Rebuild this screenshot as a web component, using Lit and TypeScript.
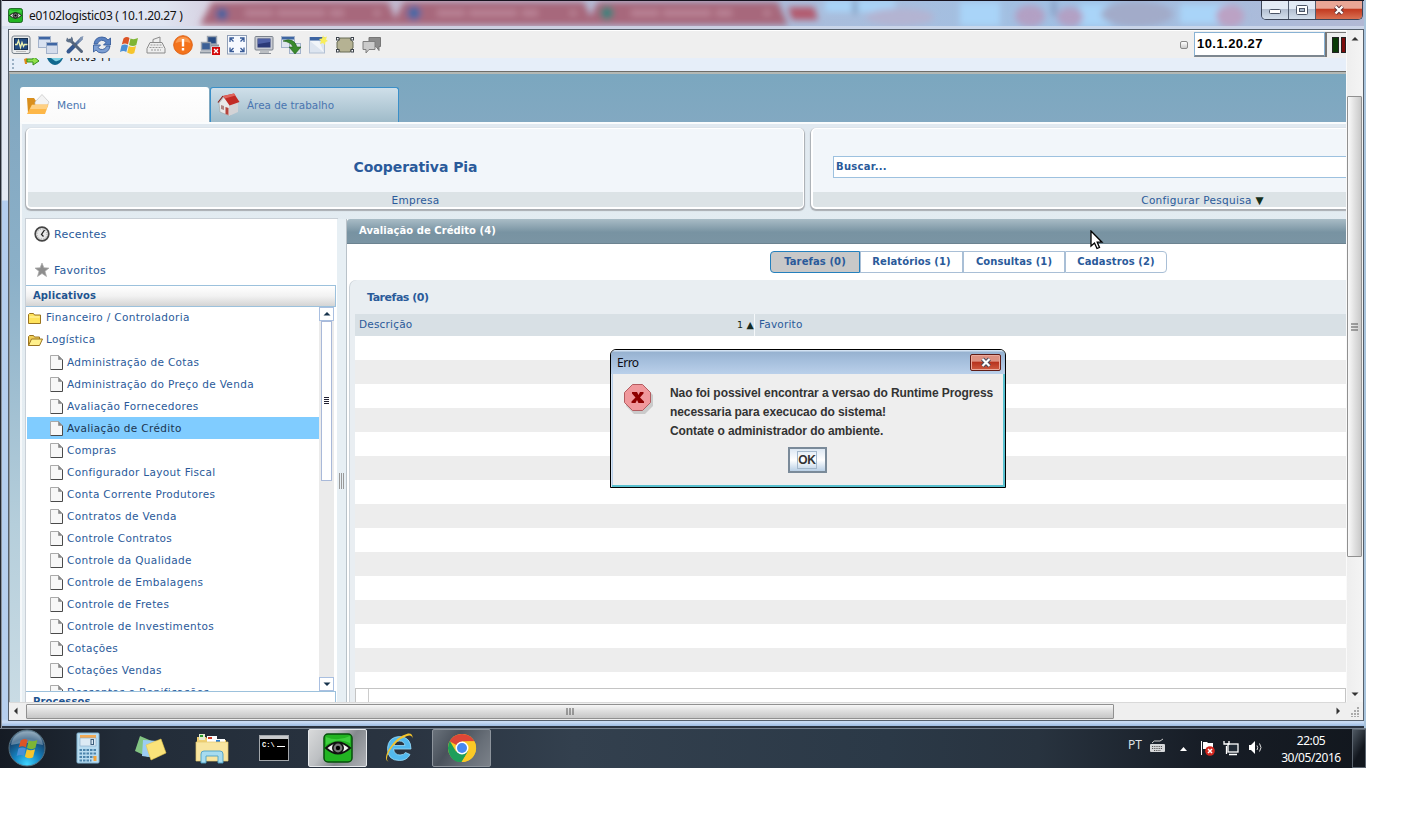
import { LitElement, html, svg, css } from "lit";
import { customElement } from "lit/decorators.js";
import { classMap } from "lit/directives/class-map.js";

const ico = (w: number, h: number, body: unknown) =>
  html`<svg width=${w} height=${h} viewBox="0 0 ${w} ${h}" aria-hidden="true">${body}</svg>`;

const TREE = [
  "Administração de Cotas", "Administração do Preço de Venda", "Avaliação Fornecedores",
  "Avaliação de Crédito", "Compras", "Configurador Layout Fiscal", "Conta Corrente Produtores",
  "Contratos de Venda", "Controle Contratos", "Controle da Qualidade", "Controle de Embalagens",
  "Controle de Fretes", "Controle de Investimentos", "Cotações", "Cotações Vendas",
  "Descontos e Bonificações",
];

const eye = (s: number) => html`<svg width=${s} height=${s} viewBox="0 0 30 30">
  <rect x="1" y="1" width="28" height="28" rx="4" fill="#22b422" stroke="#064d0c" stroke-width="1.5"/>
  <path d="M3 4Q15 9 27 3V10Q15 4 3 12Z" fill="#4cd84c" opacity=".7"/>
  <path d="M3 15Q15 4 27 15Q15 26 3 15Z" fill="#f4f4f4" stroke="#111" stroke-width="1.8"/>
  <circle cx="15" cy="15" r="5.2" fill="#777" stroke="#111" stroke-width="1.6"/>
  <circle cx="15" cy="15" r="2.2" fill="#000"/></svg>`;

const winFlag = svg`<g><path d="M4.500 3.500Q7.500 1 10.500 3L9 9.500Q6 7.500 2.800 9.500Z" fill="#dc5426"/><path d="M11.500 3.500Q15 5 19 3L17.300 10Q14 12 10 10Z" fill="#7fb534"/><path d="M2.500 10.500Q6 8.500 9 10.500L7.300 17Q4.500 15 1 17Z" fill="#4a8fd6"/><path d="M9.800 11Q13 13 17 11L15.300 18Q12 20 8.200 17.500Z" fill="#f6c52d"/></g>`;

const TOOLS = [
  svg`<rect x="1" y="1" width="18" height="17.500" rx="2" fill="#e9ebec" stroke="#7a838c"/><rect x="3.500" y="3.500" width="13" height="11" fill="#234c80" stroke="#16304f"/><path d="M4 9.500h2l1.500-4 2 7 1.500-5 1.500 4 1-2h3" fill="none" stroke="#eef2b0" stroke-width="1.300"/><path d="M5 16.500h10" stroke="#bbb"/>`,
  svg`<rect x=".5" y="1.500" width="12" height="11" fill="#d9e2f1" stroke="#a3b2ca"/><rect x="1" y="2" width="11" height="2.500" fill="#3f66a3"/><rect x="8.500" y="7.500" width="11" height="11" fill="#d4dceb" stroke="#a3b2ca"/><rect x="9" y="8" width="10" height="2.500" fill="#3f66a3"/>`,
  svg`<path d="M17 3L10 10" stroke="#5d78a3" stroke-width="3"/><path d="M10 10L3.500 16.500" stroke="#35588f" stroke-width="4" stroke-linecap="round"/><path d="M5 5l11.500 11.500" stroke="#53647b" stroke-width="3" stroke-linecap="round"/><path d="M2 2.500l3 3 1.500-4Q9 4 7.500 7 4 8.500 1 6Z" fill="#5f7189"/><path d="M14 6l1.500-4 3-1-1 3-2.500 3Z" fill="#8296b4"/>`,
  svg`<path d="M2 9Q3 2 10 2q4 0 6 3l2.500-2v7h-7l2.500-2.500Q12 5 9.500 5.300 6 6 5.500 9Z" fill="#5c83c1" stroke="#2c5394" stroke-width=".8"/><path d="M18 11q-1 7-8 7-4 0-6-3l-2.500 2v-7h7L6 12.500q2 2.500 4.500 2Q14 14 14.500 11Z" fill="#7d9fd3" stroke="#2c5394" stroke-width=".8"/>`,
  winFlag,
  svg`<path d="M4 7.500h12l3 6v4.500H1v-4.500Z" fill="#eee" stroke="#8b8b8b"/><path d="M7 7V4.500L14 2v5" fill="none" stroke="#8b8b8b"/><path d="M4.500 10h11M3.500 12.500h13M5 15h10" stroke="#999" stroke-dasharray="2 1"/>`,
  svg`<circle cx="10" cy="10" r="9.300" fill="#f4731c" stroke="#de6418"/><path d="M2.500 8Q4 2 10 2t7.500 6Q10 5 2.500 8" fill="#fba45f" opacity=".8"/><rect x="8.800" y="4" width="2.400" height="7.500" fill="#fff"/><rect x="8.800" y="13" width="2.400" height="2.500" fill="#fff"/>`,
  svg`<rect x="7.500" y="1.500" width="9" height="7.500" fill="#274a82" stroke="#9aa3b0" stroke-width="1.400"/><rect x="1.500" y="7.500" width="9" height="7.500" fill="#3b5f96" stroke="#9aa3b0" stroke-width="1.400"/><path d="M0 17.500h11M11 10.500h8" stroke="#8b949f" stroke-width="2"/><rect x="12" y="12" width="8" height="8" fill="#d40b0b"/><path d="M14 14l4 4m0-4l-4 4" stroke="#fff" stroke-width="1.300"/>`,
  svg`<rect x=".5" y=".5" width="19" height="18.500" fill="#f6f9ff" stroke="#8f9eb6"/><path d="M3 7V3h4M3.500 3.500l3 3M17 7V3h-4M16.500 3.500l-3 3M3 12.500v4h4M3.500 16l3-3M17 12.500v4h-4M16.500 16l-3-3" fill="none" stroke="#3a5c98" stroke-width="1.300"/>`,
  svg`<rect x="1" y="1.500" width="18" height="13.500" rx="1" fill="#c9ccd3" stroke="#7c838d"/><rect x="3.500" y="3.500" width="13" height="9" fill="#2b3978"/><path d="M4 4h12v3L4 9Z" fill="#4f60a6"/><path d="M6 17h9M5 18.500h12" stroke="#8a8f98" stroke-width="1.200"/>`,
  svg`<rect x=".5" y="1.500" width="13" height="11" fill="#dfe5ef" stroke="#a3b2ca"/><rect x="1" y="2" width="12" height="2.500" fill="#3f66a3"/><rect x="8.500" y="8.500" width="11" height="10" fill="#dfe5ef" stroke="#a3b2ca"/><path d="M2 6Q13 2 16 12h4l-6 7-6-7h4Q10 7 2 6Z" fill="#3a8a2c" stroke="#22601a" stroke-width=".6"/>`,
  svg`<rect x="1.500" y="2.500" width="15" height="15.500" fill="#dde5f0" stroke="#b3c0d3"/><path d="M2 2h13v3.500H2Z" fill="#3d64a1"/><path d="M2 6h9l5 11.500" fill="#fff" opacity=".6"/><path d="M15 0l1 2.500 3-1-1 3 2 1.500-2.500 1-.5 3-2-2-3 1 1-3-2-2 3-.500Z" fill="#f8ee5c"/>`,
  svg`<path d="M5 3h10q1 3 3 4v6q-2 1-3 4H5q-1-3-3-4V7q2-1 3-4Z" fill="#b5b293" stroke="#666a55"/><g fill="#fff" stroke="#3d434b"><rect x="1.500" y="2.500" width="2.500" height="2.500"/><rect x="16" y="2.500" width="2.500" height="2.500"/><rect x="1.500" y="14.500" width="2.500" height="2.500"/><rect x="16" y="14.500" width="2.500" height="2.500"/></g>`,
  svg`<path d="M7 2.500h11.500v9h-1.500v4l-3-4H7Z" fill="#8b8b8b" stroke="#777"/><path d="M1 6.500h12v8H7l-3 3.500v-3.500H1Z" fill="#cbcbcb" stroke="#7f7f7f"/>`,
];

@customElement("app-root")
export class AppRoot extends LitElement {
  static styles = css`
    :host { display: block; width: 1426px; height: 820px; overflow: hidden; background: #fff;
      font-family: "DejaVu Sans", Verdana, sans-serif; font-size: 10px; color: #2a5a9a; }
    * { box-sizing: border-box; }
    svg { display: block; flex: none; }
    .desktop { position: relative; width: 1366px; height: 768px; display: flex; flex-direction: column; background: #1b2230; }
    .win { height: 728px; display: flex; flex-direction: column; padding: 0 2px 8px 8px;
      background: linear-gradient(90deg, #23272f 0 1px, #8d949e 1px 2px, transparent 2px 1364px, #a9c4dc 1364px),
        linear-gradient(180deg, #dfe6f2 0, #e4eaf4 200px, #b4cdee 201px, #b6cfee 719px, #cadcf4 722px, #9dbce2 726px, #2a3340 726px); }
    .title { height: 29px; margin-left: -6px; position: relative; display: flex; align-items: flex-start; border-top: 1px solid #17131f; background: #d6dbec; overflow: hidden; flex: none; }
    .backdrop { position: absolute; inset: 0; }
    .title .cap { position: relative; display: flex; align-items: center; gap: 6px; padding: 5px 0 0 6px; height: 23px; font: 12px "Noto Sans", "Open Sans", sans-serif; letter-spacing: -0.28px; color: #111; white-space: nowrap; }
    .wbtns { position: relative; margin-left: auto; margin-right: 1px; display: flex; height: 19px; border: 1px solid #3c4658; border-top: 0; border-radius: 0 0 5px 5px; overflow: hidden; }
    .wbtns div { display: flex; align-items: center; justify-content: center; width: 27px; background: linear-gradient(#e3ebf5 0 45%, #b3bfd1 46%, #d4dfec); border-right: 1px solid #515c6e; }
    .wbtns .x { width: 46px; border: 0; background: linear-gradient(#e9a696 0 40%, #c23a20 46%, #d97052); }
    .client { height: 692px; flex: none; width: 1356px; border: 1px solid #56606c; display: grid; grid-template: 672px 17px / 1337px 17px; background: #efefef; overflow: hidden; }
    .view { display: flex; flex-direction: column; overflow: hidden; margin-left: -1px; }
    .tools { height: 28px; flex: none; display: flex; align-items: center; background: #efefef; border-top: 1px solid #fff; padding-left: 3px; }
    .tools .ic { width: 27px; display: flex; }
    .conn { margin-left: auto; display: flex; align-items: center; gap: 6px; height: 27px; }
    .led { width: 8px; height: 8px; border: 1px solid #888; border-radius: 2px; background: linear-gradient(#fff, #ccc); }
    .ip { width: 131px; height: 25px; background: #fff; border: 1px solid #88b2d4; border-bottom: 2px solid #7d8790; padding: 3px 2px; font: bold 13px/15px "Liberation Sans", Arial, sans-serif; letter-spacing: .45px; color: #000; }
    .meter { height: 25px; width: 21px; margin-left: -6px; border-left: 2px solid #777; border-top: 1px solid #777; padding: 4px 0 0 5px; display: flex; gap: 2px; }
    .meter i { width: 8px; height: 16px; background: #0b3a07; border: 1px solid #222; } .meter i + i { background: #7c0d0d; width: 6px; }
    .crumb { height: 14px; flex: none; overflow: hidden; background: #e6eef9; display: flex; border-bottom: 1px solid #6e6e6a; padding-left: 3px; gap: 8px; }
    .crumb span { font: 11.500px/12px "Noto Sans", sans-serif; color: #111; margin-top: -7px; margin-left: -3px; }
    .page { flex: 1; min-height: 0; display: flex; flex-direction: column; padding: 13px 0 0 10px; border-top: 2px solid #b4b8b4; border-left: 2px solid #969da0;
      background: linear-gradient(#7ba7bf, #84a9c2 60px, #8bb0c8 200px, #b5cedb 450px, #c9dbe4); }
    .tabs { height: 35px; flex: none; display: flex; gap: 1px; font-size: 10.600px; color: #4a75b0; }
    .tab { width: 189px; display: flex; align-items: center; gap: 7px; padding-left: 6px; border-radius: 3px 3px 0 0; background: linear-gradient(#fff, #fafafa); }
    .tab.b { border: 1px solid #3a8fc8; border-bottom: 0; background: linear-gradient(#cfdfe9, #9fbbc9); gap: 6px; }
    .tab.b span { font-size: 10.400px }
    .body { flex: 1; min-height: 0; display: flex; flex-direction: column; gap: 10px; background: linear-gradient(#e1e9f0, #e2ebf1 60px, #e8eff3); border-top: 2px solid #fafcfd; border-left: 2px solid #f5f8fa; padding: 4px 0 0 4px; }
    .cards { display: flex; height: 81px; gap: 7px; flex: none; font-size: 10.500px; letter-spacing: .3px; }
    .card { flex: none; border: 2px solid #fff; border-top-width: 1px; border-right-width: 1px; border-radius: 5px; box-shadow: 0 1px 1px 1px #a9adb2; background: #f2f6fa; display: flex; flex-direction: column; overflow: hidden; }
    .card .main { flex: 1; display: flex; align-items: center; justify-content: center; padding-top: 13px; }
    .card .foot { height: 15px; background: #dce3e6; text-align: center; line-height: 17px; }
    .c1 { width: 778px; } .c2 { width: 600px; }
    .c1 .main { font: bold 14px "DejaVu Sans"; letter-spacing: -.06px; }
    .search { flex: 1; margin-left: 20px; margin-right: -4px; height: 22px; border: 1px solid #9dc1df; background: #fff; line-height: 19px; padding-left: 2px; font-weight: bold; font-size: 10px; letter-spacing: .3px }
    .c2 .foot { padding-left: 182px; }
    .c2 .foot .dn { color: #16301c; }
    .cols { flex: 1; min-height: 0; display: flex; }
    .side { width: 311px; flex: none; display: flex; flex-direction: column; background: #fff; box-shadow: 0 0 0 1px #c9d0d7; }
    .quick { height: 36px; flex: none; display: flex; align-items: center; gap: 4px; padding: 0 0 6px 8px; font-size: 11px; letter-spacing: .25px; }
    .q2 { height: 30px; padding-bottom: 0; }
    .sec { height: 22px; flex: none; font-weight: bold; line-height: 20px; padding-left: 7px; border: 1px solid #9cc1dc; border-left: 0; margin-right: 1px; background: linear-gradient(#fff, #f2f2f2 50%, #d4d4d4); letter-spacing: .1px; color: #1f5490 }
    .sec.p { height: 13px; overflow: hidden; background: #fff; border-bottom: 0; }
    .treebox { height: 384px; display: flex; flex: none; }
    .tree { width: 293px; overflow: hidden; font-size: 10.500px; letter-spacing: .34px; }
    .row { height: 22px; display: flex; align-items: center; gap: 3px; padding-left: 2px; white-space: nowrap; }
    .row span { margin-top: -2px; } .leaf span { margin-top: -1px; }
    .leaf { padding-left: 24px; gap: 4px; } .leaf svg { margin-top: 1px; }
    .sel { background: #80ccff; color: #1b3550; margin-left: 1px; padding-left: 23px; }
    .sb { width: 15px; background: #ebebeb; display: flex; flex-direction: column; }
    .sb .bt { height: 14px; border: 1px solid #a9bfe0; background: #fff; display: grid; place-items: center; }
    .sb .th { height: 160px; margin: 0 2px; border: 1px solid #a9b9d9; background: #fff; display: grid; place-items: center; }
    .sb .bt.d { margin-top: auto; }
    .split { width: 10px; flex: none; display: grid; place-items: center; padding-top: 40px; border-right: 1px solid #b9c2c9; background: #e7eff4; }
    .panel { flex: 1; min-width: 0; display: flex; flex-direction: column; background: #fff; }
    .ph { height: 25px; flex: none; background: linear-gradient(#a9bcc6, #7893a2 55%, #7a94a3); border-bottom: 1px solid #6c8390; color: #fff; font-weight: bold; line-height: 23px; padding-left: 12px; border-radius: 3px 0 0 0; letter-spacing: .05px; }
    .seg { display: flex; margin: 7px 0 7px 423px; height: 22px; flex: none; font-weight: bold; letter-spacing: .1px }
    .seg div { border: 1px solid #a9bfd6; text-align: center; line-height: 19px; background: #fff; white-space: nowrap; flex: none; }
    .seg .on { background: #c8c8c8; border-color: #2480bd; border-radius: 4px 0 0 4px; }
    .seg .last { border-radius: 0 4px 4px 0; }
    .grid { flex: 1; min-height: 0; margin-left: 3px; padding-left: 5px; background: #e9eef2; border-radius: 7px 0 0 0; display: flex; flex-direction: column; box-shadow: -1px 0 0 #ccd3d9; }
    .gt { height: 34px; flex: none; font: bold 11px/36px "DejaVu Sans"; letter-spacing: -.46px; padding-left: 12px; }
    .gh { height: 22px; flex: none; display: flex; background: #d8e0e5; line-height: 21px; font-size: 10.500px; letter-spacing: .2px; }
    .gh .d { width: 400px; display: flex; padding: 0 0 0 4px; border-right: 1px solid #f5f8fa; }
    .gh .d b { margin-left: auto; font-weight: normal; color: #152a22; font-size: 9.500px }
    .gh .f { padding-left: 4px; }
    .zebra { height: 352px; flex: none; background: repeating-linear-gradient(#fff 0 24px, #ededed 24px 48px); }
    .gf { height: 15px; flex: none; background: #fff; border: 1px solid #c4c4c4; } .gf i { display: block; width: 13px; height: 13px; border-right: 1px solid #ccc; }
    .vs { display: flex; flex-direction: column; align-items: center; justify-content: space-between; background: linear-gradient(90deg, #eee, #f4f4f4); padding: 5px 1px 4px 0; height: 672px; border-left: 1px solid #fafafa; }
    .vs .th { width: 15px; height: 461px; margin: 53px 0 auto; border: 1px solid #909090; border-radius: 1px; background: linear-gradient(90deg, #fafafa, #e3e3e3 45%, #c9c9c9); display: grid; place-items: center; }
    .hs { display: flex; align-items: center; justify-content: space-between; background: #efefef; border-top: 1px solid #d9d9d9; padding: 0 4px 0 3px; }
    .hs .th { width: 1088px; height: 15px; margin: 0 auto 0 6px; border: 1px solid #909090; border-radius: 1px; background: linear-gradient(#f7f7f7, #dedede 45%, #c6c6c6); display: grid; place-items: center; }
    .grip { display: grid; place-items: center; padding-top: 3px; }
    .task { height: 40px; display: flex; align-items: stretch; background: linear-gradient(#76818e 0 1px, transparent 1px), linear-gradient(90deg, #151b24, #222c38 9%, #2a3441 30%, #33404e 42%, #2b3947 65%, #28333f 76%, #171d26 88%, #12171e); }
    .ap { width: 62px; display: grid; place-items: center; }
    .ap.st { width: 57px; padding-right: 4px; }
    .ap.on { width: 59px; border: 1px solid #e6e9ec; border-radius: 2px; background: linear-gradient(125deg, #d9dadb 0, #bcbfc2 35%, #85898e 60%, #aeb1b6); margin: 1px 1px 1px 3px; height: 38px; }
    .ap.ch { margin-left: 2px; border-color: #8d949c; background: linear-gradient(125deg, #6a727b, #4a525c 35%, #686f78 70%, #7b8189); }
    .tray { margin-left: auto; display: flex; align-items: center; color: #fff; font: 12px "Noto Sans", "Open Sans", sans-serif; }
    .tray .pt { font-size: 12px; color: #dde1e6; margin-right: 7px; margin-top: -7px; }
    .tray .kb { margin-top: -5px; }
    .clock { text-align: center; line-height: 17px; width: 60px; letter-spacing: -.42px; font-size: 12px; margin: 1px 11px 0 17px; white-space: nowrap; }
    .show { width: 14px; height: 39px; border: 1px solid #5c656f; background: linear-gradient(120deg, #4e5862, #12171e 60%); align-self: flex-end; }
    .dlg { position: absolute; left: 610px; top: 349px; width: 396px; height: 139px; border: 1px solid #000; border-radius: 6px 6px 0 0; background: #eee; box-shadow: inset 1px 0 #d5e4f5, inset -2px -2px #58c0cf, inset 2px 0 #b9cfe8; display: flex; flex-direction: column; color: #222; overflow: hidden; }
    .dt { height: 24px; flex: none; display: flex; justify-content: space-between; padding: 4px 4px 0 6px; background: linear-gradient(#d3e2f2 0 1px, #97b2d0 2px, #a3bddb 40%, #bad0ea); font: 12px/18px "Noto Sans", sans-serif; letter-spacing: -.5px; color: #0c0c14; }
    .dx { width: 31px; height: 17px; border: 1px solid #5f1c16; border-radius: 2px; box-shadow: inset 0 0 0 1px #eba99b; background: linear-gradient(#dd9181 0 42%, #b6311c 46%, #cf5c42); display: grid; place-items: center; }
    .db { display: flex; gap: 16px; padding: 9px 0 0 12px; }
    .msg { font: bold 12px/19px "Liberation Sans", Arial, sans-serif; white-space: nowrap; color: #333; letter-spacing: -.078px; padding-top: 1px; }
    .ok { align-self: center; width: 39px; height: 26px; border: 2px solid #7a8a99; background: linear-gradient(#dde8f3, #fff 50%, #b8cfe5); margin-top: 6px; margin-left: -2px; display: grid; place-items: center; font: bold 12px/15px "Liberation Sans", Arial, sans-serif; color: #333; }
    .ok span { border: 1px solid #a3b8cc; height: 18px; line-height: 17px; letter-spacing: -.2px; }
    .cursor { position: absolute; left: 1090px; top: 230px; }
  `;

  private arrow(dir: "u" | "d" | "l" | "r", c = "#333") {
    const d = { u: "M0.500 5.500L4 2L7.500 5.500Z", d: "M0.500 2.500L4 6L7.500 2.500Z", l: "M5.500 .5V7.500L2 4Z", r: "M2.500 .5V7.500L6 4Z" }[dir];
    return ico(8, 8, svg`<path d=${d} fill=${c}/>`);
  }

  private titlebar() {
    const tab = (x: number, w: number) => svg`<path d="M${x} 25L${x + 12} 2H${x + w - 10}L${x + w} 25Z" fill="#a7687c"/><path d="M${x + 45} 13h${w * .5}" stroke="#bb8598" stroke-width="6" stroke-dasharray="28 4 48 5"/><path d="M${x + w - 24} 13h6" stroke="#c08d9f" stroke-width="4"/>`;
    return html`<div class="title">
      <div class="backdrop"><svg width="1364" height="28" viewBox="2 1 1364 28">
        <defs><filter id="bl" x="-5%" y="-50%" width="110%" height="200%"><feGaussianBlur stdDeviation="3"/></filter>
        <linearGradient id="tg" x2="1" y2="0"><stop offset="0" stop-color="#e6eaf5"/><stop offset=".12" stop-color="#dfe4f1"/><stop offset=".2" stop-color="#c9b7cb"/><stop offset=".6" stop-color="#a9bddc"/><stop offset=".8" stop-color="#9fc0e4"/><stop offset="1" stop-color="#b2b8d4"/></linearGradient></defs>
        <rect x="0" y="0" width="1366" height="30" fill="url(#tg)"/>
        <g filter="url(#bl)">${tab(200, 198)}${tab(392, 202)}${tab(586, 202)}
          <circle cx="222" cy="14" r="6" fill="#42639f"/><circle cx="414" cy="13" r="7" fill="#4a68a4"/><circle cx="607" cy="13" r="7" fill="#427f7c"/>
          <path d="M788 7h26l4 13h-26Z" fill="#b25c70"/>
          <path d="M825 0h70v12h-70ZM960 2h40v24h-40ZM1080 4h32v22h-32ZM1180 4h50v20h-50Z" fill="#a9d4f8"/>
          <path d="M853 0h4v14h-4Z" fill="#7d93b4"/><path d="M1052 0h4v16h-4Z" fill="#8598bd"/>
          <ellipse cx="1030" cy="16" rx="15" ry="11" fill="#b2a0c4"/><ellipse cx="900" cy="17" rx="34" ry="9" fill="#b3b4d2"/><ellipse cx="1070" cy="17" rx="13" ry="10" fill="#b2a0c4"/><ellipse cx="1137" cy="14" rx="36" ry="13" fill="#a2abc9"/><ellipse cx="1230" cy="16" rx="14" ry="11" fill="#bba2c4"/>
        </g>
        <rect x="0" y="26" width="1366" height="3" fill="#d4ddee" opacity=".75"/></svg></div>
      <div class="cap">${eye(15)}<span>e0102logistic03 ( 10.1.20.27 )</span></div>
      <div class="wbtns"><div>${ico(14, 12, svg`<rect x="1.500" y="5.500" width="11" height="4" rx="1" fill="#fff" stroke="#4c5566"/>`)}</div>
      <div>${ico(14, 12, svg`<rect x="1.500" y="1.500" width="11" height="9" rx="1" fill="#fff" stroke="#4c5566"/><rect x="4.500" y="4.500" width="5" height="3" fill="#aab8ca" stroke="#4c5566"/>`)}</div>
      <div class="x">${ico(14, 12, svg`<path d="M3.500 2.500l7 7m0-7l-7 7" stroke="#5d3238" stroke-width="4.200"/><path d="M3.500 2.500l7 7m0-7l-7 7" stroke="#fff" stroke-width="2.400"/>`)}</div></div>
    </div>`;
  }

  private toolbar() {
    return html`<div class="tools">${TOOLS.map((t) => html`<div class="ic">${ico(20, 20, t)}</div>`)}
      <div class="conn"><div class="led"></div><div class="ip">10.1.20.27</div><div class="meter"><i></i><i></i></div></div></div>
      <div class="crumb">${ico(5, 13, svg`<path d="M2 1v12" stroke="#9bb0c4" stroke-width="2" stroke-dasharray="2 2"/>`)}
        ${ico(15, 8, svg`<path d="M0 1l3-1v6H1Z" fill="#e08a1c"/><path d="M3 1h6V-2l6 5-6 4V4H3Z" fill="#8fe04a" stroke="#348c1a"/>`)}
        ${ico(16, 8, svg`<path d="M0 0h16Q13 7 8 7T0 0Z" fill="#11688e"/><path d="M4 0h11Q12 4 8 3Z" fill="#7ed0e4"/>`)}
        <span>Totvs 11</span></div>`;
  }

  private sidebar() {
    const folder = (open: boolean) => ico(15, 13, open
      ? svg`<path d="M.5 11.500v-9l1-1h4l1 1.500h5v2" fill="#f1cf58" stroke="#9a7420"/><path d="M.5 11.500l3-6.500h11l-3 6.500Z" fill="#fff08c" stroke="#9a7420"/>`
      : svg`<path d="M.5 11.500v-9l1-1h4l1 1.500h6v8.500Z" fill="#ffe35c" stroke="#9a7420"/><path d="M1.500 5h10" stroke="#fff6b0"/>`);
    const doc = ico(13, 15, svg`<path d="M.5 .5h8l4 4v10H.5Z" fill="#f7f7f7"/><path d="M.5 14V.5h8" fill="none" stroke="#aaa"/><path d="M12.500 4.500v10H.5" fill="none" stroke="#4a4a4a"/><path d="M8.500 .5v4h4Z" fill="#888" stroke="#888" stroke-width=".6"/>`);
    return html`<div class="side">
      <div class="quick">${ico(16, 16, svg`<circle cx="8" cy="8" r="6.800" fill="#e8e8e8" stroke="#444" stroke-width="1.700"/><circle cx="8" cy="8" r="5" fill="none" stroke="#999" stroke-dasharray="1 1.600"/><path d="M10.500 4L7.500 8.500L9.500 10.500" fill="none" stroke="#222" stroke-width="1.300"/>`)}<span>Recentes</span></div>
      <div class="quick q2">${ico(16, 16, svg`<path d="M8 1l1.900 4.800 5.100.3-4 3.200 1.500 5.200L8 11.500l-4.500 3L5 9.300 1 6.100l5.100-.3Z" fill="#8d8d8d" stroke="#a9a9a9" stroke-width=".7"/>`)}<span>Favoritos</span></div>
      <div class="sec">Aplicativos</div>
      <div class="treebox"><div class="tree">
        <div class="row">${folder(false)}<span>Financeiro / Controladoria</span></div>
        <div class="row">${folder(true)}<span>Logística</span></div>
        ${TREE.map((t, i) => html`<div class=${classMap({ row: true, leaf: true, sel: i === 3 })}>${doc}<span>${t}</span></div>`)}
      </div><div class="sb"><div class="bt">${this.arrow("u", "#17344d")}</div>
        <div class="th">${ico(5, 8, svg`<path d="M0 .5h5M0 2.500h5M0 4.500h5M0 6.500h5" stroke="#223"/>`)}</div>
        <div class="bt d">${this.arrow("d", "#17344d")}</div></div></div>
      <div class="sec p">Processos</div></div>`;
  }

  private main() {
    const segs: [string, number][] = [["Tarefas (0)", 90], ["Relatórios (1)", 103], ["Consultas (1)", 102], ["Cadastros (2)", 102]];
    return html`<div class="panel"><div class="ph">Avaliação de Crédito (4)</div>
      <div class="seg">${segs.map(([t, w], i) => html`<div class=${classMap({ on: i === 0, last: i === 3 })} style="width:${w}px">${t}</div>`)}</div>
      <div class="grid"><div class="gt">Tarefas (0)</div>
        <div class="gh"><div class="d">Descrição<b>1 ▲</b></div><div class="f">Favorito</div></div>
        <div class="zebra"></div><div class="gf"><i></i></div></div></div>`;
  }

  private taskbar() {
    return html`<div class="task">
      <div class="ap st">${ico(38, 38, svg`<defs><radialGradient id="orb" cx=".5" cy=".95" r=".95"><stop offset="0" stop-color="#3fd5ff"/><stop offset=".4" stop-color="#1482c0"/><stop offset=".75" stop-color="#17456f"/><stop offset="1" stop-color="#7e99ad"/></radialGradient></defs><circle cx="19" cy="19" r="18" fill="url(#orb)" stroke="#56707f"/><path d="M3 16Q5 3 19 2.500T35 16Q19 12 3 16" fill="#dceaf2" opacity=".35"/><g transform="translate(7.500 7.500) scale(1.150)">${winFlag}</g>`)}</div>
      <div class="ap">${ico(26, 32, svg`<rect x="2" y="1" width="22" height="30" rx="1" fill="#b9dcf0" stroke="#82b4d2"/><rect x="5" y="3" width="16" height="3" fill="#f2aa55"/><rect x="5" y="6" width="16" height="8" fill="#dceaf4" stroke="#83a9c5" stroke-width=".6"/><rect x="16" y="7.500" width="2.500" height="5" fill="none" stroke="#3d5f7d"/><path d="M4.500 18h17M4.500 21.500h17M4.500 25h17M4.500 28.500h12" stroke="#4c84ab" stroke-width="2" stroke-dasharray="2.500 1"/><rect x="18.500" y="24" width="3" height="5" fill="#f2a33a"/>`)}</div>
      <div class="ap">${ico(34, 28, svg`<path d="M7 2L21 8L15 23L2 17Z" fill="#83c583"/><path d="M10 6L25 7L23 24L9 22Z" fill="#9ccdf3"/><path d="M13 11L28 5L33 19L18 26Z" fill="#fae37a" stroke="#e8c84b" stroke-width=".6"/>`)}</div>
      <div class="ap">${ico(34, 32, svg`<path d="M2 5h9l2 3h18v21H2Z" fill="#f0cf72"/><path d="M4 2h6v6H4Z" fill="#e5ecd0"/><path d="M5 3h3v2H5Z" fill="#2ca02c"/><path d="M12 4h10v6H12Z" fill="#fff"/><path d="M13 5h4v2h-4Z" fill="#cf3b26"/><path d="M20 7h10v4H20Z" fill="#fff"/><path d="M21 8h4v2h-4Z" fill="#2f7fd0"/><path d="M1 10h32v19H1Z" fill="#f8e5a0" stroke="#e2c56c" stroke-width=".7"/><path d="M6 31V22Q6 19 9 19H25Q28 19 28 22V31H23V24H11V31Z" fill="#a7dcef" stroke="#4d9fc4" stroke-width=".9"/>`)}</div>
      <div class="ap"><svg width="30" height="26" viewBox="0 0 30 26"><rect x=".5" y=".5" width="29" height="25" fill="#000" stroke="#a3a7ab"/><rect x="1" y="1" width="28" height="3" fill="#c8cacc"/><text x="3" y="12" font-family="Liberation Mono" font-size="7" font-weight="bold" fill="#fff">C:\\</text><path d="M18 11.500h8" stroke="#fff"/></svg></div>
      <div class="ap on">${eye(30)}</div>
      <div class="ap">${ico(32, 32, svg`<path d="M28 17H10.500Q11.500 23 17 23q4 0 5.500-2.500l4.500 2Q24 28.500 16.500 28.500 4.500 28.500 4.500 16.500 5 5 16.500 4.500 28 5 28 17ZM10.800 13.500H22Q21 9 16.500 9q-4.500 0-5.700 4.500Z" fill="#53b9ee" stroke="#9bdcf9" stroke-width=".8"/><path d="M6 30Q0 28 6 17 14 4 25 1.500q5-.5 4.500 5Q29 2.500 24 4 13 8 6 20q-4 8 0 10Z" fill="#f3c42c"/>`)}</div>
      <div class="ap on ch">${ico(30, 30, svg`<circle cx="15" cy="15" r="14" fill="#fbc926"/><path d="M15 15L2.500 8.200Q7 1 15 1t12.500 7.200H15Z" fill="#dd4637"/><path d="M2.800 8Q-1 15 3 22.500T14.500 29L21 18.500 9 18.500Z" fill="#1e9e5a"/><path d="M15 29l6.200-10.700Q23 14 20 8.500h7.500Q31 16 27 22.500T15 29Z" fill="#fbc926"/><circle cx="15" cy="15" r="6.500" fill="#fff"/><circle cx="15" cy="15" r="5" fill="#4688f1"/>`)}</div>
      <div class="tray"><span class="pt">PT</span>
        <div class="kb">${ico(17, 16, svg`<path d="M3 5Q5 2 8 3T14 1" fill="none" stroke="#ccc"/><rect x="1" y="6" width="15" height="8" rx="1" fill="#d6d8da"/><path d="M3 8.500h11M3 10.500h11M5 12.500h7" stroke="#555" stroke-dasharray="1.200 1"/>`)}</div>
        <svg width="34" height="16" viewBox="0 0 34 16"><path d="M14 11h7l-3.500-4Z" fill="#fff"/></svg>
        ${ico(16, 16, svg`<path d="M1.500 1v14" stroke="#fff"/><path d="M3 2h4l1 1h5v6H3Z" fill="#fff"/><circle cx="10" cy="11" r="4.800" fill="#d3271f"/><path d="M8 9l4 4m0-4l-4 4" stroke="#fff" stroke-width="1.500"/>`)}
        <svg width="24" height="16" viewBox="0 0 24 16"><rect x="12" y="4" width="10" height="8" fill="#222b35" stroke="#fff" stroke-width="1.300"/><path d="M13 14.500h8M10.500 6v8" stroke="#fff" stroke-width="1.300"/><path d="M8 1v3h5V1" fill="none" stroke="#fff" stroke-width="1.300"/></svg>
        <svg width="24" height="16" viewBox="0 0 24 16"><path d="M9 5h2l4-4v13l-4-4H9Z" fill="#fff"/><path d="M17 5.500q1.500 2 0 4.500M19.500 3.500q3 4 0 8" stroke="#ddd" fill="none"/></svg>
        <div class="clock">22:05<br>30/05/2016</div><div class="show"></div></div></div>`;
  }

  render() {
    return html`<div class="desktop"><div class="win">${this.titlebar()}
      <div class="client"><div class="view">${this.toolbar()}
        <div class="page"><div class="tabs">
          <div class="tab">${ico(24, 22, svg`<path d="M1 4h7l2 3h7v12H2Z" fill="#d98f1d"/><path d="M9 8L16 .5 23 8 20 14H9Z" fill="#f3f3f3" stroke="#bbb" stroke-width=".6"/><path d="M1 20L6 10.500H22.500L19 20Z" fill="#fdb748"/><path d="M6 11h16l-1.500 4H4Z" fill="#fed083"/>`)}<span>Menu</span></div>
          <div class="tab b">${ico(24, 24, svg`<path d="M2 10l5-6 6 8v11l-10-4Z" fill="#e9e9e9" stroke="#999" stroke-width=".5"/><path d="M12 12l9-3v10l-9 4Z" fill="#d3d3d6"/><path d="M4 12l3 1v4l-3-1Z" fill="#b08482"/><path d="M8.500 14l3 1v7l-3-1Z" fill="#b5443c"/><path d="M6 3l11-2.500 5.500 8.500-10 3.500Z" fill="#c22b25"/><path d="M6 3L1 9.500" stroke="#8a1e18" stroke-width="1.200"/><path d="M6 3l11-2.500 1.500 2L8 5.500Z" fill="#e0645c"/>`)}<span>Área de trabalho</span></div></div>
          <div class="body"><div class="cards">
            <div class="card c1"><div class="main">Cooperativa Pia</div><div class="foot">Empresa</div></div>
            <div class="card c2"><div class="main"><div class="search">Buscar...</div></div><div class="foot">Configurar Pesquisa <span class="dn">▼</span></div></div></div>
            <div class="cols">${this.sidebar()}
              <div class="split">${ico(6, 16, svg`<path d="M.5 0v16M2.500 0v16M4.500 0v16" stroke="#999"/>`)}</div>${this.main()}</div></div></div></div>
        <div class="vs">${this.arrow("u")}<div class="th">${ico(7, 8, svg`<path d="M0 1h7M0 4h7M0 7h7" stroke="#555"/>`)}</div>${this.arrow("d")}</div>
        <div class="hs">${this.arrow("l")}<div class="th">${ico(8, 7, svg`<path d="M1 0v7M4 0v7M7 0v7" stroke="#555"/>`)}</div>${this.arrow("r")}</div>
        <div class="grip">${ico(10, 10, svg`<path d="M8 0v10M5 3v7M2 6v4" stroke="#aaa" stroke-width="2" stroke-dasharray="2 1"/>`)}</div>
      </div></div>${this.taskbar()}
      <div class="dlg"><div class="dt"><span>Erro</span><div class="dx">${ico(12, 11, svg`<path d="M2.500 2l7 7m0-7l-7 7" stroke="#444a5c" stroke-width="4"/><path d="M2.500 2l7 7m0-7l-7 7" stroke="#fff" stroke-width="2.200"/>`)}</div></div>
        <div class="db">${ico(31, 32, svg`<path d="M11 4h11l8 8v11l-8 8H11l-8-8V12Z" fill="#bbb" opacity=".7"/><path d="M9.500 1.500h10l8 8v10l-8 8h-10l-8-8v-10Z" fill="#f0989c" stroke="#b35c60"/><path d="M9 9h5l1.500 3L17 9h3.500v1.500L17 14.500l4 4V20h-5.500L14 17l-1.500 3H8.500v-1.500l4-4-3.500-4Z" fill="#8e0000"/>`)}
          <div class="msg">Nao foi possivel encontrar a versao do Runtime Progress<br>necessaria para execucao do sistema!<br>Contate o administrador do ambiente.</div></div>
        <div class="ok"><span>OK</span></div></div>
      <svg class="cursor" width="14" height="20" viewBox="0 0 14 20"><path d="M1 1V16L4.500 13L7 18.500L9.500 17.500L7.200 12.200H12Z" fill="#fff" stroke="#000" stroke-width="1.300"/></svg>
    </div>`;
  }
}
